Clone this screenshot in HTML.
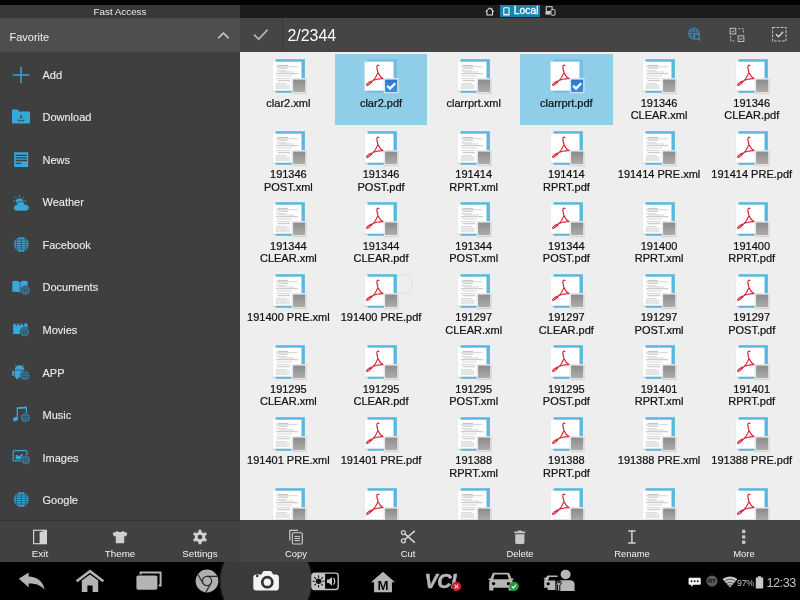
<!DOCTYPE html>
<html><head><meta charset="utf-8"><title>File Manager</title>
<style>
html,body{margin:0;padding:0;background:#000;}
body{width:800px;height:600px;overflow:hidden;font-family:"Liberation Sans",sans-serif;}
#root{will-change:transform;position:relative;width:800px;height:600px;overflow:hidden;background:#000;}
#root div,#root svg{position:absolute;}
/* top strips */
#fa{left:0;top:5px;width:240px;height:13px;background:#383838;color:#ececec;font-size:9.8px;line-height:13px;text-align:center;}
#path{left:240px;top:5px;width:560px;height:13px;background:#1d1d1d;}
#fav{left:0;top:18px;width:240px;height:34px;background:#4e4e4e;color:#f0f0f0;font-size:11px;}
#fav .t{left:9.5px;top:1.5px;line-height:35px;white-space:nowrap;}
#tb{left:240px;top:18px;width:560px;height:33.5px;background:#454545;}
#tb .sep{left:42px;top:0;width:1px;height:33.5px;background:#3a3a3a;}
#tb .cnt{left:47.5px;top:0;line-height:35px;font-size:15.9px;color:#fff;white-space:nowrap;}
/* sidebar */
#list{left:0;top:52px;width:240px;height:468px;background:#3f3f3f;}
.it{left:0;width:240px;height:42.6px;}
.it .lb{left:42.5px;top:0;line-height:42.6px;font-size:11px;color:#ececec;white-space:nowrap;-webkit-text-stroke:0.12px #ececec;}
.it svg{left:10px;top:9.3px;}
#sdiv{left:0;top:519.5px;width:240px;height:1px;background:#343434;}
#sbot{left:0;top:520.5px;width:240px;height:42px;background:#414141;}
.bt{width:80px;height:42px;top:0;}
.bt .lb{left:0;width:100%;text-align:center;top:28.2px;line-height:12px;font-size:9.4px;color:#f2f2f2;white-space:nowrap;}
/* grid */
#grid{left:240px;top:51.5px;width:560px;height:468px;background:#eeeeee;overflow:hidden;}
.cell{width:92.75px;height:71px;}
.cell.sel{background:#8fcde8;}
.cell.sel .fi{color:#72c1e5;}
.cell .fi{color:#5ab8e0;left:25.8px;top:2.65px;}
.cell .nm{left:-10px;width:112.75px;top:42.9px;text-align:center;font-size:11px;color:#101010;-webkit-text-stroke:0.22px #101010;}
.cell .nm .ln{position:relative !important;line-height:12.7px;height:12.7px;white-space:nowrap;}
/* bottom action bar */
#abar{left:240px;top:519.5px;width:560px;height:43px;background:#454545;}
#abar .bt{width:112px;}
/* nav */
#nav{left:0;top:562.4px;width:800px;height:37.6px;background:#000;overflow:hidden;}
#nav .clock{left:766.5px;top:13.9px;font-size:12.6px;line-height:14px;color:#c4c4c4;white-space:nowrap;letter-spacing:-0.45px;}
#nav .pct{left:737px;top:14.3px;font-size:9.9px;line-height:12px;color:#c4c4c4;white-space:nowrap;letter-spacing:-0.3px;transform:scaleX(0.9);transform-origin:0 0;}
.touch{left:153px;top:222px;width:18px;height:18px;border-radius:50%;background:#eceef1;border:0.7px solid #e1e1e1;}
#sbot .bt .lb{top:27.2px;font-size:9.8px;}
#sbot .bt svg{margin-top:-0.6px;}

</style></head><body>
<svg width="0" height="0" style="position:absolute"><defs>
<linearGradient id="gchk" x1="0" y1="0" x2="0" y2="1"><stop offset="0" stop-color="#8b8b8b"/><stop offset="1" stop-color="#adadad"/></linearGradient>
<linearGradient id="gchkb" x1="0" y1="0" x2="0" y2="1"><stop offset="0" stop-color="#2f74cf"/><stop offset="1" stop-color="#3c8ee2"/></linearGradient>
<filter id="sh" x="-20%" y="-20%" width="140%" height="140%"><feGaussianBlur stdDeviation="0.7"/></filter>
<g id="page">
 <rect x="7.600" y="3.200" width="29.300" height="33.600" fill="currentColor"/>
 <rect x="4.2" y="6" width="29.6" height="29.6" fill="#9a9a9a" opacity="0.35" filter="url(#sh)"/>
 <rect x="4.5" y="5.7" width="29" height="29" fill="#ffffff"/>
</g>
<g id="ic-xml">
 <use href="#page"/>
 <g stroke-width="0.7" fill="none">
  <path d="M9.5 9.4H20M9.5 12.2H20M8 17.700H30M9.500 24.700H22" stroke="#a6a6a6"/>
  <path d="M8 10.700H29.500M8 14.700H18.500M10.500 16H26M9 20H24M8 22.700H22M8 27.700H19M8 29.200H21.500" stroke="#c2c2c2"/>
 </g>
 <rect x="7.500" y="30.200" width="14" height="3" fill="#e4e4e4"/>
</g>
<g id="ic-pdf">
 <use href="#page"/>
 <path d="M18.900 9.500C17.700 8.400 16.600 9.400 16.900 11.600 17.100 13.600 17.600 15.300 18.100 16.700 19.200 19.400 21 21.600 23.200 22.700M18 16.600C16.600 20.300 14 24 11.400 26.400 9.600 28.100 7.600 30 6.800 29.400 6 28.700 8 26.700 10.600 25.600 13 24.500 15 23.600 17 23.200 19.300 22.700 21.400 22.500 23.200 22.700" fill="none" stroke="#d51f33" stroke-width="1.150" stroke-linecap="round" stroke-linejoin="round"/>
</g>
<g id="chkoff">
 <rect x="23.9" y="22.5" width="15" height="15.6" fill="#707070" opacity="0.4" filter="url(#sh)"/>
 <rect x="23.700" y="22.100" width="15" height="15.500" fill="#e8e8e8"/>
 <rect x="25.100" y="23.600" width="12.100" height="12.500" fill="url(#gchk)"/>
</g>
<g id="chkon">
 <rect x="23.9" y="22.5" width="15" height="15.6" fill="#5a6a7a" opacity="0.4" filter="url(#sh)"/>
 <rect x="23.700" y="22.100" width="15" height="15.500" fill="#dbe8f3"/>
 <rect x="25.100" y="23.600" width="12.100" height="12.500" fill="url(#gchkb)"/>
 <path d="M27.200 29.800l2.800 2.800 5.200-5.400" fill="none" stroke="#fff" stroke-width="2.300"/>
</g>

</defs></svg>
<div id="root">
<div id="fa">Fast Access</div>
<div id="path">
 <svg style="left:244.500px;top:2px" width="10" height="9" viewBox="0 0 10 9"><path d="M.7 4.600L4.700 .9 8.700 4.600M1.900 4V8H7.500V4M7 1.200V2.600" fill="none" stroke="#dcdcdc" stroke-width="1.100"/></svg>
 <div style="left:260px;top:0;width:40px;height:12px;background:#1883b0"></div>
 <svg style="left:263.300px;top:2px" width="7" height="9" viewBox="0 0 7 9"><rect x=".2" y=".2" width="6.400" height="8.400" rx=".9" fill="#eaf6fb"/><rect x="1.400" y="1.300" width="4" height="5.600" fill="#1883b0"/></svg>
 <div style="left:273.800px;top:.4px;line-height:12.500px;font-size:10.300px;color:#fff;white-space:nowrap;-webkit-text-stroke:.3px #fff">Local</div>
 <svg style="left:305px;top:1.200px" width="11" height="10" viewBox="0 0 11 10"><rect x="1.300" y=".7" width="5.800" height="4.800" fill="none" stroke="#c8c8c8" stroke-width="1.100"/><rect x=".4" y="6" width="5" height="2.600" fill="#c8c8c8"/><rect x="6" y="3.600" width="4" height="5.600" rx=".7" fill="#1d1d1d" stroke="#c8c8c8" stroke-width="1"/></svg>
</div>
<div id="fav"><div class="t">Favorite</div>
 <svg style="left:216px;top:12px" width="15" height="10" viewBox="0 0 15 10"><path d="M2.2 8.2L7.4 3 12.6 8.2" fill="none" stroke="#d0d0d0" stroke-width="1.5"/></svg>
</div>
<div id="tb">
 <svg style="left:12px;top:9px" width="18" height="15" viewBox="0 0 18 15"><path d="M2 7.6L6.7 12.2 15.6 2.6" fill="none" stroke="#b4b4b4" stroke-width="1.7"/></svg>
 <div class="sep"></div>
 <div class="cnt">2/2344</div>
 <svg style="left:447px;top:9px" width="15.500" height="15.500" viewBox="0 0 17 17"><g fill="none" stroke="#3b90bb" stroke-width="0.9"><circle cx="7.6" cy="7.4" r="6"/><path d="M1.6 7.4H13.6M2.6 4.2H12.6M2.6 10.6H9M7.6 1.4V13.4M4.6 2.2C3.6 5 3.6 10 4.6 12.6M10.6 2.2C11.4 4.4 11.6 6 11.5 7.5"/></g><circle cx="10.8" cy="10.6" r="2.6" fill="#454545" stroke="#3b90bb" stroke-width="1.1"/><path d="M12.8 12.6L15 14.9" stroke="#3b90bb" stroke-width="1.3"/></svg>
 <svg style="left:488.700px;top:8.800px" width="16" height="16" viewBox="0 0 17 17"><g fill="none" stroke="#c2c2c2" stroke-width="1"><rect x="1.2" y="1.4" width="6" height="6"/><rect x="9.8" y="9.4" width="6" height="6"/><path d="M2.6 4.2l1.3 1.3 2.2-2.4M11.2 12.2l1.3 1.3 2.2-2.4"/><path d="M9.8 1.9H15.3V7.4M1.7 9.4V14.9H7.2" stroke-dasharray="2.2 1.4"/></g></svg>
 <svg style="left:530.600px;top:8px" width="16.800" height="16.800" viewBox="0 0 18 18"><rect x="1.7" y="1.7" width="14.4" height="14.4" fill="none" stroke="#c2c2c2" stroke-width="1.1" stroke-dasharray="3 1.3"/><path d="M5.2 8.8l2.8 2.8 5-5.4" fill="none" stroke="#d6d6d6" stroke-width="1.500"/></svg>
</div>

<div id="list">
<div class="it" style="top:1.6px"><svg width="22" height="24" viewBox="0 0 22 24"><path d="M2.7 12H19.3M11 3.7V20.3" stroke="#36a9dc" stroke-width="1.5" fill="none"/></svg><div class="lb">Add</div></div>
<div class="it" style="top:44.2px"><svg width="22" height="24" viewBox="0 0 22 24"><path d="M2 5.6c0-.6.4-1 1-1h4.2c.5 0 .8.2 1.100 .6l.9 1.200h9.800c.600 0 1 .4 1 1v10.200c0 .6-.4 1-1 1H3c-.6 0-1-.4-1-1z" fill="#36a9dc"/><path d="M11 9.400V13.400M9.400 12L11 13.600 12.600 12" stroke="#3e3e3e" stroke-width="0.9" fill="none"/><path d="M8 14.400V15.800H14V14.400" stroke="#3e3e3e" stroke-width="0.9" fill="none"/></svg><div class="lb">Download</div></div>
<div class="it" style="top:86.7px"><svg width="22" height="24" viewBox="0 0 22 24"><rect x="4.2" y="4.3" width="14" height="14.7" fill="#36a9dc"/><path d="M5.800 7.300H17M5.800 9.900H17M5.800 12.500H17M5.800 15.300H11" stroke="#3e3e3e" stroke-width="1.300" fill="none"/></svg><div class="lb">News</div></div>
<div class="it" style="top:129.3px"><svg width="22" height="24" viewBox="0 0 22 24"><path d="M5.600 11.400A4 4 0 0 1 13.600 11.400z" fill="#36a9dc"/><path d="M9.600 4.200V6M5.200 5.800L6.300 7.200M14 5.800L12.900 7.200M3.200 9.600L4.800 10.200M16 9.600L14.400 10.200" stroke="#36a9dc" stroke-width="0.9" fill="none"/><path d="M6.800 20c-1.900 0-3.200-1.400-3.200-3.100 0-1.700 1.300-3 2.900-3.100.4-2.100 2.100-3.500 4.200-3.500 2 0 3.700 1.300 4.200 3.200.2 0 .5-.1.700-.1 2 0 3.600 1.500 3.600 3.300 0 1.800-1.600 3.300-3.600 3.300z" fill="#36a9dc" stroke="#3e3e3e" stroke-width="0.7"/></svg><div class="lb">Weather</div></div>
<div class="it" style="top:171.8px"><svg width="22" height="24" viewBox="0 0 22 24"><circle cx="11.3" cy="11.5" r="7.4" fill="#36a9dc"/><g stroke="#2b4552" stroke-width="0.75" fill="none" opacity="0.9"><path d="M5.49 6.91H17.11M4.26 9.21H18.34M3.90 11.50H18.70M4.26 13.79H18.34M5.49 16.09H17.11M11.3 4.1V18.9M8.34 4.692C5.972 8.54 5.972 14.46 8.34 18.308M14.26 4.692C16.628 8.54 16.628 14.46 14.26 18.308"/></g></svg><div class="lb">Facebook</div></div>
<div class="it" style="top:214.4px"><svg width="22" height="24" viewBox="0 0 22 24"><path d="M2.300 5.400c2.600-.9 5.300-.6 7.400 .5V16.600c-2.100-1-4.800-1.300-7.400-.5zM17.700 5.400c-2.600-.9-5.300-.6-7.400 .5V16.600c2.100-1 4.800-1.300 7.400-.5z" fill="#36a9dc"/><circle cx="15.5" cy="14.4" r="5" fill="#3e3e3e"/><g stroke="#3a86a8" stroke-width="0.65" fill="none"><circle cx="15.5" cy="14.4" r="4" fill="#33474f"/><path d="M11.2 14.4H19.8M11.845 12.25H19.155M11.845 16.55H19.155M15.5 10.1V18.7M13.995 10.401C12.275 12.68 12.275 16.12 13.995 18.399M17.005 10.401C18.725 12.68 18.725 16.12 17.005 18.399"/></g></svg><div class="lb">Documents</div></div>
<div class="it" style="top:257.0px"><svg width="22" height="24" viewBox="0 0 22 24"><path d="M3.200 6.200l1.600-.6 1.400 1.800h1.600L6.500 5.600h1.800l1.300 1.800h1.700L10 5.600h1.900l1.300 1.800h1.600L13.600 5.600h3.900V15.200c0 .5-.4 .9-.9 .9H4.100c-.5 0-.9-.4-.9-.9z" fill="#36a9dc"/><circle cx="14.8" cy="14" r="5" fill="#3e3e3e"/><g stroke="#3a86a8" stroke-width="0.65" fill="none"><circle cx="14.8" cy="14" r="4" fill="#33474f"/><path d="M10.5 14H19.1M11.145 11.85H18.455M11.145 16.15H18.455M14.8 9.7V18.3M13.295 10.001C11.575 12.28 11.575 15.72 13.295 17.999M16.305 10.001C18.025 12.28 18.025 15.72 16.305 17.999"/></g></svg><div class="lb">Movies</div></div>
<div class="it" style="top:299.5px"><svg width="22" height="24" viewBox="0 0 22 24"><path d="M4.600 8.800c.2-2.700 2.300-4.600 4.900-4.600 2.600 0 4.700 1.900 4.900 4.600z" fill="#36a9dc"/><path d="M6 4.800L5 3.300M13 4.800L14 3.300" stroke="#36a9dc" stroke-width="0.8"/><rect x="4.600" y="9.600" width="9.800" height="6.800" rx="1" fill="#36a9dc"/><rect x="2.200" y="9.600" width="1.800" height="5.400" rx=".9" fill="#36a9dc"/><rect x="15" y="9.600" width="1.800" height="5.400" rx=".9" fill="#36a9dc"/><rect x="6.200" y="15" width="2" height="3.600" rx="1" fill="#36a9dc"/><rect x="10.800" y="15" width="2" height="3.600" rx="1" fill="#36a9dc"/><circle cx="15.2" cy="14.6" r="5" fill="#3e3e3e"/><g stroke="#3a86a8" stroke-width="0.65" fill="none"><circle cx="15.2" cy="14.6" r="4" fill="#33474f"/><path d="M10.9 14.6H19.5M11.545 12.45H18.855M11.545 16.75H18.855M15.2 10.3V18.9M13.695 10.601C11.975 12.88 11.975 16.32 13.695 18.599M16.705 10.601C18.425 12.88 18.425 16.32 16.705 18.599"/></g></svg><div class="lb">APP</div></div>
<div class="it" style="top:342.1px"><svg width="22" height="24" viewBox="0 0 22 24"><path d="M6.700 4.300L17 3.500V10.600H15.800V5.400L7.950 6V16.200H6.700z" fill="#36a9dc"/><ellipse cx="5.400" cy="16.200" rx="2.600" ry="2" transform="rotate(-20 5.400 16.200)" fill="#36a9dc"/><circle cx="15.4" cy="14.6" r="5.2" fill="#3e3e3e"/><g stroke="#3a86a8" stroke-width="0.65" fill="none"><circle cx="15.4" cy="14.6" r="4.2" fill="#33474f"/><path d="M10.9 14.6H19.9M11.575 12.35H19.225M11.575 16.85H19.225M15.4 10.1V19.1M13.825 10.415C12.025 12.8 12.025 16.4 13.825 18.785M16.975 10.415C18.775 12.8 18.775 16.4 16.975 18.785"/></g></svg><div class="lb">Music</div></div>
<div class="it" style="top:384.6px"><svg width="22" height="24" viewBox="0 0 22 24"><rect x="3.200" y="4.700" width="13.600" height="10.200" rx=".9" fill="none" stroke="#3aa0cf" stroke-width="1.200"/><path d="M5.600 13.200V9.600L7.200 8.700 9.200 10.300 12.800 7.500V13.200z" fill="#36a9dc"/><circle cx="15.7" cy="13.9" r="5" fill="#3e3e3e"/><g stroke="#3a86a8" stroke-width="0.65" fill="none"><circle cx="15.7" cy="13.9" r="4" fill="#33474f"/><path d="M11.4 13.9H20M12.045 11.75H19.355M12.045 16.05H19.355M15.7 9.6V18.2M14.195 9.901C12.475 12.18 12.475 15.62 14.195 17.899M17.205 9.901C18.925 12.18 18.925 15.62 17.205 17.899"/></g></svg><div class="lb">Images</div></div>
<div class="it" style="top:427.2px"><svg width="22" height="24" viewBox="0 0 22 24"><circle cx="11.3" cy="11.5" r="7.4" fill="#36a9dc"/><g stroke="#2b4552" stroke-width="0.75" fill="none" opacity="0.9"><path d="M5.49 6.91H17.11M4.26 9.21H18.34M3.90 11.50H18.70M4.26 13.79H18.34M5.49 16.09H17.11M11.3 4.1V18.9M8.34 4.692C5.972 8.54 5.972 14.46 8.34 18.308M14.26 4.692C16.628 8.54 16.628 14.46 14.26 18.308"/></g></svg><div class="lb">Google</div></div>
</div>
<div id="sdiv"></div>
<div id="grid">
<div class="touch"></div>
<div class="cell" style="left:2.00px;top:2.25px"><svg class="fi" width="40" height="40" viewBox="0 0 40 40"><use href="#ic-xml"/><use href="#chkoff"/></svg><div class="nm"><div class="ln">clar2.xml</div></div></div>
<div class="cell sel" style="left:94.67px;top:2.25px"><svg class="fi" width="40" height="40" viewBox="0 0 40 40"><use href="#ic-pdf"/><use href="#chkon"/></svg><div class="nm"><div class="ln">clar2.pdf</div></div></div>
<div class="cell" style="left:187.34px;top:2.25px"><svg class="fi" width="40" height="40" viewBox="0 0 40 40"><use href="#ic-xml"/><use href="#chkoff"/></svg><div class="nm"><div class="ln">clarrprt.xml</div></div></div>
<div class="cell sel" style="left:280.01px;top:2.25px"><svg class="fi" width="40" height="40" viewBox="0 0 40 40"><use href="#ic-pdf"/><use href="#chkon"/></svg><div class="nm"><div class="ln">clarrprt.pdf</div></div></div>
<div class="cell" style="left:372.68px;top:2.25px"><svg class="fi" width="40" height="40" viewBox="0 0 40 40"><use href="#ic-xml"/><use href="#chkoff"/></svg><div class="nm"><div class="ln">191346</div><div class="ln">CLEAR.xml</div></div></div>
<div class="cell" style="left:465.35px;top:2.25px"><svg class="fi" width="40" height="40" viewBox="0 0 40 40"><use href="#ic-pdf"/><use href="#chkoff"/></svg><div class="nm"><div class="ln">191346</div><div class="ln">CLEAR.pdf</div></div></div>
<div class="cell" style="left:2.00px;top:73.75px"><svg class="fi" width="40" height="40" viewBox="0 0 40 40"><use href="#ic-xml"/><use href="#chkoff"/></svg><div class="nm"><div class="ln">191346</div><div class="ln">POST.xml</div></div></div>
<div class="cell" style="left:94.67px;top:73.75px"><svg class="fi" width="40" height="40" viewBox="0 0 40 40"><use href="#ic-pdf"/><use href="#chkoff"/></svg><div class="nm"><div class="ln">191346</div><div class="ln">POST.pdf</div></div></div>
<div class="cell" style="left:187.34px;top:73.75px"><svg class="fi" width="40" height="40" viewBox="0 0 40 40"><use href="#ic-xml"/><use href="#chkoff"/></svg><div class="nm"><div class="ln">191414</div><div class="ln">RPRT.xml</div></div></div>
<div class="cell" style="left:280.01px;top:73.75px"><svg class="fi" width="40" height="40" viewBox="0 0 40 40"><use href="#ic-pdf"/><use href="#chkoff"/></svg><div class="nm"><div class="ln">191414</div><div class="ln">RPRT.pdf</div></div></div>
<div class="cell" style="left:372.68px;top:73.75px"><svg class="fi" width="40" height="40" viewBox="0 0 40 40"><use href="#ic-xml"/><use href="#chkoff"/></svg><div class="nm"><div class="ln">191414 PRE.xml</div></div></div>
<div class="cell" style="left:465.35px;top:73.75px"><svg class="fi" width="40" height="40" viewBox="0 0 40 40"><use href="#ic-pdf"/><use href="#chkoff"/></svg><div class="nm"><div class="ln">191414 PRE.pdf</div></div></div>
<div class="cell" style="left:2.00px;top:145.25px"><svg class="fi" width="40" height="40" viewBox="0 0 40 40"><use href="#ic-xml"/><use href="#chkoff"/></svg><div class="nm"><div class="ln">191344</div><div class="ln">CLEAR.xml</div></div></div>
<div class="cell" style="left:94.67px;top:145.25px"><svg class="fi" width="40" height="40" viewBox="0 0 40 40"><use href="#ic-pdf"/><use href="#chkoff"/></svg><div class="nm"><div class="ln">191344</div><div class="ln">CLEAR.pdf</div></div></div>
<div class="cell" style="left:187.34px;top:145.25px"><svg class="fi" width="40" height="40" viewBox="0 0 40 40"><use href="#ic-xml"/><use href="#chkoff"/></svg><div class="nm"><div class="ln">191344</div><div class="ln">POST.xml</div></div></div>
<div class="cell" style="left:280.01px;top:145.25px"><svg class="fi" width="40" height="40" viewBox="0 0 40 40"><use href="#ic-pdf"/><use href="#chkoff"/></svg><div class="nm"><div class="ln">191344</div><div class="ln">POST.pdf</div></div></div>
<div class="cell" style="left:372.68px;top:145.25px"><svg class="fi" width="40" height="40" viewBox="0 0 40 40"><use href="#ic-xml"/><use href="#chkoff"/></svg><div class="nm"><div class="ln">191400</div><div class="ln">RPRT.xml</div></div></div>
<div class="cell" style="left:465.35px;top:145.25px"><svg class="fi" width="40" height="40" viewBox="0 0 40 40"><use href="#ic-pdf"/><use href="#chkoff"/></svg><div class="nm"><div class="ln">191400</div><div class="ln">RPRT.pdf</div></div></div>
<div class="cell" style="left:2.00px;top:216.75px"><svg class="fi" width="40" height="40" viewBox="0 0 40 40"><use href="#ic-xml"/><use href="#chkoff"/></svg><div class="nm"><div class="ln">191400 PRE.xml</div></div></div>
<div class="cell" style="left:94.67px;top:216.75px"><svg class="fi" width="40" height="40" viewBox="0 0 40 40"><use href="#ic-pdf"/><use href="#chkoff"/></svg><div class="nm"><div class="ln">191400 PRE.pdf</div></div></div>
<div class="cell" style="left:187.34px;top:216.75px"><svg class="fi" width="40" height="40" viewBox="0 0 40 40"><use href="#ic-xml"/><use href="#chkoff"/></svg><div class="nm"><div class="ln">191297</div><div class="ln">CLEAR.xml</div></div></div>
<div class="cell" style="left:280.01px;top:216.75px"><svg class="fi" width="40" height="40" viewBox="0 0 40 40"><use href="#ic-pdf"/><use href="#chkoff"/></svg><div class="nm"><div class="ln">191297</div><div class="ln">CLEAR.pdf</div></div></div>
<div class="cell" style="left:372.68px;top:216.75px"><svg class="fi" width="40" height="40" viewBox="0 0 40 40"><use href="#ic-xml"/><use href="#chkoff"/></svg><div class="nm"><div class="ln">191297</div><div class="ln">POST.xml</div></div></div>
<div class="cell" style="left:465.35px;top:216.75px"><svg class="fi" width="40" height="40" viewBox="0 0 40 40"><use href="#ic-pdf"/><use href="#chkoff"/></svg><div class="nm"><div class="ln">191297</div><div class="ln">POST.pdf</div></div></div>
<div class="cell" style="left:2.00px;top:288.25px"><svg class="fi" width="40" height="40" viewBox="0 0 40 40"><use href="#ic-xml"/><use href="#chkoff"/></svg><div class="nm"><div class="ln">191295</div><div class="ln">CLEAR.xml</div></div></div>
<div class="cell" style="left:94.67px;top:288.25px"><svg class="fi" width="40" height="40" viewBox="0 0 40 40"><use href="#ic-pdf"/><use href="#chkoff"/></svg><div class="nm"><div class="ln">191295</div><div class="ln">CLEAR.pdf</div></div></div>
<div class="cell" style="left:187.34px;top:288.25px"><svg class="fi" width="40" height="40" viewBox="0 0 40 40"><use href="#ic-xml"/><use href="#chkoff"/></svg><div class="nm"><div class="ln">191295</div><div class="ln">POST.xml</div></div></div>
<div class="cell" style="left:280.01px;top:288.25px"><svg class="fi" width="40" height="40" viewBox="0 0 40 40"><use href="#ic-pdf"/><use href="#chkoff"/></svg><div class="nm"><div class="ln">191295</div><div class="ln">POST.pdf</div></div></div>
<div class="cell" style="left:372.68px;top:288.25px"><svg class="fi" width="40" height="40" viewBox="0 0 40 40"><use href="#ic-xml"/><use href="#chkoff"/></svg><div class="nm"><div class="ln">191401</div><div class="ln">RPRT.xml</div></div></div>
<div class="cell" style="left:465.35px;top:288.25px"><svg class="fi" width="40" height="40" viewBox="0 0 40 40"><use href="#ic-pdf"/><use href="#chkoff"/></svg><div class="nm"><div class="ln">191401</div><div class="ln">RPRT.pdf</div></div></div>
<div class="cell" style="left:2.00px;top:359.75px"><svg class="fi" width="40" height="40" viewBox="0 0 40 40"><use href="#ic-xml"/><use href="#chkoff"/></svg><div class="nm"><div class="ln">191401 PRE.xml</div></div></div>
<div class="cell" style="left:94.67px;top:359.75px"><svg class="fi" width="40" height="40" viewBox="0 0 40 40"><use href="#ic-pdf"/><use href="#chkoff"/></svg><div class="nm"><div class="ln">191401 PRE.pdf</div></div></div>
<div class="cell" style="left:187.34px;top:359.75px"><svg class="fi" width="40" height="40" viewBox="0 0 40 40"><use href="#ic-xml"/><use href="#chkoff"/></svg><div class="nm"><div class="ln">191388</div><div class="ln">RPRT.xml</div></div></div>
<div class="cell" style="left:280.01px;top:359.75px"><svg class="fi" width="40" height="40" viewBox="0 0 40 40"><use href="#ic-pdf"/><use href="#chkoff"/></svg><div class="nm"><div class="ln">191388</div><div class="ln">RPRT.pdf</div></div></div>
<div class="cell" style="left:372.68px;top:359.75px"><svg class="fi" width="40" height="40" viewBox="0 0 40 40"><use href="#ic-xml"/><use href="#chkoff"/></svg><div class="nm"><div class="ln">191388 PRE.xml</div></div></div>
<div class="cell" style="left:465.35px;top:359.75px"><svg class="fi" width="40" height="40" viewBox="0 0 40 40"><use href="#ic-pdf"/><use href="#chkoff"/></svg><div class="nm"><div class="ln">191388 PRE.pdf</div></div></div>
<div class="cell" style="left:2.00px;top:431.25px"><svg class="fi" width="40" height="40" viewBox="0 0 40 40"><use href="#ic-xml"/><use href="#chkoff"/></svg><div class="nm"></div></div>
<div class="cell" style="left:94.67px;top:431.25px"><svg class="fi" width="40" height="40" viewBox="0 0 40 40"><use href="#ic-pdf"/><use href="#chkoff"/></svg><div class="nm"></div></div>
<div class="cell" style="left:187.34px;top:431.25px"><svg class="fi" width="40" height="40" viewBox="0 0 40 40"><use href="#ic-xml"/><use href="#chkoff"/></svg><div class="nm"></div></div>
<div class="cell" style="left:280.01px;top:431.25px"><svg class="fi" width="40" height="40" viewBox="0 0 40 40"><use href="#ic-pdf"/><use href="#chkoff"/></svg><div class="nm"></div></div>
<div class="cell" style="left:372.68px;top:431.25px"><svg class="fi" width="40" height="40" viewBox="0 0 40 40"><use href="#ic-xml"/><use href="#chkoff"/></svg><div class="nm"></div></div>
<div class="cell" style="left:465.35px;top:431.25px"><svg class="fi" width="40" height="40" viewBox="0 0 40 40"><use href="#ic-pdf"/><use href="#chkoff"/></svg><div class="nm"></div></div>
</div>
<div id="sbot">
 <div class="bt" style="left:0">
  <svg style="left:32px;top:9.5px" width="16" height="16" viewBox="0 0 16 16"><rect x="1.600" y="1.300" width="12.800" height="13.400" fill="none" stroke="#cfcfcf" stroke-width="1.200"/><path d="M7.600 3.200L14.400 1.300V14.700H7.600z" fill="#d4d4d4"/></svg>
  <div class="lb">Exit</div></div>
 <div class="bt" style="left:80px">
  <svg style="left:32px;top:10.5px" width="16" height="14" viewBox="0 0 16 14"><path d="M5.300 1C6 2.300 10 2.300 10.700 1L15.400 3.200 14 6.600 12.200 5.900V13.200H3.800V5.900L2 6.600 .6 3.200z" fill="#d0d0d0"/></svg>
  <div class="lb">Theme</div></div>
 <div class="bt" style="left:160px">
  <svg style="left:32px;top:9.500px" width="16" height="16" viewBox="0 0 16 16"><g transform="translate(8 8)"><g fill="#d0d0d0"><circle r="5.300"/><rect x="-1.500" y="-7.300" width="3" height="14.600" rx=".4"/><rect x="-1.500" y="-7.300" width="3" height="14.600" rx=".4" transform="rotate(60)"/><rect x="-1.500" y="-7.300" width="3" height="14.600" rx=".4" transform="rotate(120)"/></g><circle r="2.300" fill="#3e3e3e"/></g></svg>
  <div class="lb">Settings</div></div>
</div>
<div id="abar">
 <div class="bt" style="left:0">
  <svg style="left:47.500px;top:9.500px" width="16" height="16" viewBox="0 0 16 16"><path d="M1.800 11.600V1.400H10" fill="none" stroke="#cfcfcf" stroke-width="1.100"/><rect x="4.300" y="3.800" width="10" height="11.200" rx="1.200" fill="none" stroke="#cfcfcf" stroke-width="1.100"/><path d="M6.400 7.400H12.200M6.400 9.500H12.200M6.400 11.600H12.200" stroke="#cfcfcf" stroke-width="1"/></svg>
  <div class="lb">Copy</div></div>
 <div class="bt" style="left:112px">
  <svg style="left:48px;top:9.500px" width="16" height="16" viewBox="0 0 16 16"><g fill="none" stroke="#d2d2d2"><circle cx="3.400" cy="3.600" r="2" stroke-width="1.300"/><circle cx="3.400" cy="11.800" r="2" stroke-width="1.300"/><path d="M4.900 4.900L14.800 13.600M4.900 10.500L14.800 1.800" stroke-width="1.600"/></g></svg>
  <div class="lb">Cut</div></div>
 <div class="bt" style="left:224px">
  <svg style="left:48px;top:9.500px" width="16" height="16" viewBox="0 0 16 16"><path d="M2.400 2.600H5.400L6.100 1.400H9.500L10.200 2.600H13.200V4.200H2.400zM3.200 5.200H12.400V13.600C12.400 14.400 11.900 14.900 11.100 14.900H4.500C3.700 14.900 3.200 14.400 3.200 13.600z" fill="#c8c8c8"/></svg>
  <div class="lb">Delete</div></div>
 <div class="bt" style="left:336px">
  <svg style="left:48px;top:9.500px" width="16" height="16" viewBox="0 0 16 16"><path d="M4.200 1.900H11.600M4.200 14.100H11.600M7.900 1.900V14.100" fill="none" stroke="#d2d2d2" stroke-width="1.500"/></svg>
  <div class="lb">Rename</div></div>
 <div class="bt" style="left:448px">
  <svg style="left:48px;top:9.500px" width="16" height="16" viewBox="0 0 16 16"><g fill="#c8c8c8"><rect x="6" y=".8" width="3.400" height="3.400" rx=".9"/><rect x="6" y="6.200" width="3.400" height="3.400" rx=".9"/><rect x="6" y="11.600" width="3.400" height="3.400" rx=".9"/></g></svg>
  <div class="lb">More</div></div>
</div>
<div id="nav">
 <div style="left:221px;top:-26px;width:90px;height:90px;border-radius:50%;background:#3b3b3b;box-shadow:0 0 2px 1px #3b3b3b"></div>
 <!-- back -->
 <svg style="left:17px;top:8px" width="30" height="22" viewBox="0 0 30 22"><path d="M1.800 8.800L11.600 2.400V6.600C20 6.800 26 11 27.600 19.800 24 15.400 18.600 13.400 11.600 13.600V17.200z" fill="#b4b4b4"/></svg>
 <!-- home -->
 <svg style="left:75px;top:7px" width="30" height="24" viewBox="0 0 30 24"><path d="M1.600 12.200L15 2.200 28.400 12.200" fill="none" stroke="#b4b4b4" stroke-width="2.600"/><path d="M6.800 11.400L15 5.400 23.200 11.400V23H17.600V16.400H12.400V23H6.800z" fill="#b4b4b4"/></svg>
 <!-- recents -->
 <svg style="left:135px;top:9px" width="28" height="20" viewBox="0 0 28 20"><path d="M5.600 3.400V1.600H25.600V14.400H23.600" fill="none" stroke="#b4b4b4" stroke-width="2"/><rect x="1.400" y="4.400" width="21" height="14.400" rx="1.800" fill="#b4b4b4"/></svg>
 <!-- chrome -->
 <svg style="left:195.200px;top:7px" width="24" height="24" viewBox="0 0 24 24"><circle cx="12" cy="12" r="11.400" fill="#b0b0b0"/><g fill="none" stroke="#2c2c2c" stroke-width="1.200"><circle cx="12" cy="12" r="4.600"/><path d="M12 7.400H22.200M8 14.300L2.900 5.500M16 14.300L10.900 23.100"/></g><circle cx="12" cy="12" r="3.300" fill="#b0b0b0"/></svg>
 <!-- camera -->
 <svg style="left:252px;top:7.800px" width="28" height="22" viewBox="0 0 28 22"><path d="M4.400 4.400H9.400L11 1.700C11.300 1.200 11.700 1 12.300 1H18.300C18.900 1 19.300 1.200 19.600 1.700L21.200 4.400H23.800C25.700 4.400 26.900 5.600 26.900 7.500V17.500C26.900 19.400 25.700 20.600 23.800 20.600H4.400C2.500 20.600 1.300 19.400 1.300 17.500V7.500C1.300 5.600 2.500 4.400 4.400 4.400z" fill="#f3f3f3"/><circle cx="15.300" cy="12.200" r="5" fill="none" stroke="#333" stroke-width="2.700"/><circle cx="5.200" cy="6" r="1.300" fill="#333"/></svg>
 <!-- brightness / volume -->
 <svg style="left:310.600px;top:9.600px" width="28.200" height="18.800" viewBox="0 0 29 20" preserveAspectRatio="none"><rect x="1" y="1.200" width="27" height="17.400" rx="2.600" fill="none" stroke="#c4c4c4" stroke-width="1.400"/><path d="M1 3.800C1 2.200 2.200 1.200 3.600 1.200H14.500V18.600H3.600C2.200 18.600 1 17.600 1 16z" fill="#c4c4c4"/><circle cx="7.800" cy="9.900" r="2.900" fill="#111"/><path d="M7.800 3.400V6M7.800 13.800V16.400M1.600 9.900H4M11.600 9.900H14M3.400 5.500L5.100 7.200M10.500 12.600L12.200 14.300M3.400 14.300L5.100 12.600M10.500 7.200L12.200 5.500" stroke="#111" stroke-width="1.100"/><path d="M16.400 8H18.400L21.600 5.200V14.600L18.400 11.800H16.400z" fill="#c4c4c4"/><path d="M23.200 6.400C24.800 8.200 24.800 11.600 23.200 13.400" fill="none" stroke="#c4c4c4" stroke-width="1.300"/></svg>
 <!-- M home -->
 <svg style="left:370.400px;top:8.300px" width="26" height="22.600" viewBox="0 0 27 23" preserveAspectRatio="none"><path d="M13.400 .8L26 11.400H22.800V21.600H4.200V11.400H1z" fill="#b4b4b4"/><text x="13.500" y="19.200" text-anchor="middle" font-family="Liberation Sans, sans-serif" font-weight="bold" font-size="13.800" fill="#0a0a0a">M</text></svg>
 <!-- VCI -->
 <div style="left:424.5px;top:7.2px;font-size:20px;line-height:22px;font-weight:bold;font-style:italic;color:#b6b6b6;letter-spacing:-0.7px;white-space:nowrap;-webkit-text-stroke:0.5px #b6b6b6">VCI</div>
 <svg style="left:451px;top:19px" width="11" height="11" viewBox="0 0 11 11"><circle cx="5.500" cy="5.500" r="4.700" fill="#c81e2c"/><path d="M3.600 3.600L7.400 7.400M7.400 3.600L3.600 7.400" stroke="#f6d0d0" stroke-width="1.200"/></svg>
 <!-- car ok -->
 <svg style="left:487.500px;top:8.400px" width="32" height="21" viewBox="0 0 32 21"><path d="M6.200 1.800H19.800C20.800 1.800 21.400 2.300 21.800 3.200L23.400 7.400H25.400V9.200H23.900C24.500 9.800 24.800 10.600 24.800 11.600V19.400H20.600V16.800H5.400V19.400H1.200V11.600C1.200 10.600 1.500 9.800 2.100 9.200H.6V7.400H2.600L4.200 3.200C4.600 2.300 5.200 1.800 6.200 1.800z" fill="#b6b6b6"/><path d="M6.600 3.600H19.400L20.800 8.200H5.200z" fill="#000"/><circle cx="5.600" cy="12.600" r="1.700" fill="#000"/><circle cx="20.400" cy="12.600" r="1.700" fill="#000"/><circle cx="26" cy="15.400" r="4.700" fill="#1f9a3c"/><path d="M23.800 15.400L25.400 17 28.300 13.700" fill="none" stroke="#e8ffe8" stroke-width="1.200"/></svg>
 <!-- car + person -->
 <svg style="left:543px;top:6.400px" width="33" height="22.500" viewBox="0 0 33 24" preserveAspectRatio="none"><path d="M5.200 6.800H14.600V8.400H6.400L5 12.200H12.400V22.400H4.600V20H1.200V12.800C1.200 12 1.500 11.300 2.100 10.800H.8V9.400H2.800L3.800 7.600C4.100 7.100 4.600 6.800 5.200 6.800z" fill="#b6b6b6"/><circle cx="5.200" cy="15.800" r="1.600" fill="#000"/><circle cx="22.600" cy="5.800" r="5" fill="#b6b6b6"/><path d="M13.600 23.400V16.200C13.600 13.600 15.600 12 18 12H27.200C29.800 12 31.600 13.800 31.600 16.200V23.400z" fill="#b6b6b6"/><path d="M13.200 14.800C13.200 13.400 13.900 12.600 14.800 12.200V14.600H16.600V12.200C17.500 12.600 18.200 13.400 18.200 14.800 18.200 15.800 17.600 16.600 16.800 17V23.400H14.600V17C13.800 16.600 13.200 15.800 13.200 14.800z" fill="#b6b6b6" stroke="#000" stroke-width="1"/></svg>
 <!-- chat -->
 <svg style="left:688px;top:14.6px" width="13.5" height="10.8" viewBox="0 0 15 12"><path d="M1.800 .8H13C13.700 .8 14.200 1.300 14.200 2V7.400C14.200 8.100 13.700 8.600 13 8.600H6L3.600 11V8.600H1.800C1.100 8.600 .6 8.100 .6 7.400V2C.6 1.300 1.100 .8 1.800 .8z" fill="#f4f4f4"/><g fill="#111"><circle cx="4" cy="4.700" r="1"/><circle cx="7.400" cy="4.700" r="1"/><circle cx="10.800" cy="4.700" r="1"/></g></svg>
 <!-- BT -->
 <svg style="left:706px;top:13px" width="12" height="12" viewBox="0 0 12 12"><circle cx="6" cy="6" r="5.600" fill="#5a5a5a"/><text x="6" y="8.300" text-anchor="middle" font-family="Liberation Sans, sans-serif" font-weight="bold" font-size="6.200" fill="#151515">BT</text></svg>
 <!-- wifi -->
 <svg style="left:721.5px;top:14px" width="16" height="12" viewBox="0 0 16 12"><path d="M8 11.400L.6 3.200C4.800 -.4 11.200 -.4 15.400 3.200z" fill="#c6c6c6"/><g fill="none" stroke="#000" stroke-width="0.800" opacity="0.750"><path d="M2.400 5.400C5.600 2.700 10.400 2.700 13.600 5.400"/><path d="M4.400 7.600C6.500 5.900 9.500 5.900 11.600 7.600"/><path d="M6.200 9.500C7.300 8.700 8.700 8.700 9.800 9.500"/></g></svg>
 <div class="pct">97%</div>
 <!-- battery -->
 <svg style="left:755px;top:14px" width="9" height="13" viewBox="0 0 9 13"><path d="M2.800 .2H6.200V1.400H8.200V12.600H.8V1.400H2.800z" fill="#c8c8c8"/></svg>
 <div class="clock">12:33</div>
</div>

</div>
</body></html>
